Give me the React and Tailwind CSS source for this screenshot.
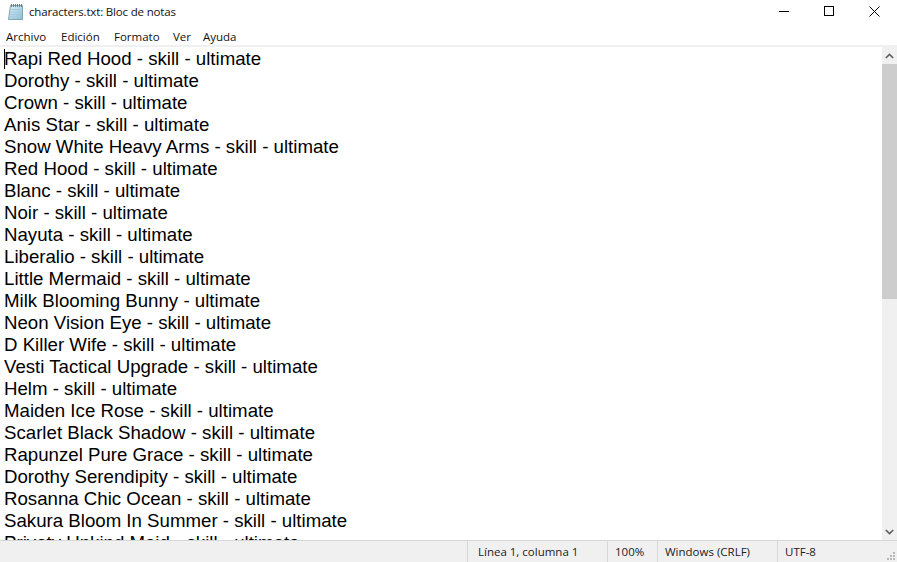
import React from "react";

const lines = [
  "Rapi Red Hood - skill - ultimate",
  "Dorothy - skill - ultimate",
  "Crown - skill - ultimate",
  "Anis Star - skill - ultimate",
  "Snow White Heavy Arms - skill - ultimate",
  "Red Hood - skill - ultimate",
  "Blanc - skill - ultimate",
  "Noir - skill - ultimate",
  "Nayuta - skill - ultimate",
  "Liberalio - skill - ultimate",
  "Little Mermaid - skill - ultimate",
  "Milk Blooming Bunny - ultimate",
  "Neon Vision Eye - skill - ultimate",
  "D Killer Wife - skill - ultimate",
  "Vesti Tactical Upgrade - skill - ultimate",
  "Helm - skill - ultimate",
  "Maiden Ice Rose - skill - ultimate",
  "Scarlet Black Shadow - skill - ultimate",
  "Rapunzel Pure Grace - skill - ultimate",
  "Dorothy Serendipity - skill - ultimate",
  "Rosanna Chic Ocean - skill - ultimate",
  "Sakura Bloom In Summer - skill - ultimate",
  "Privaty Unkind Maid - skill - ultimate",
];

const menus = [
  { label: "Archivo", w: "w-[55px]" },
  { label: "Edición", w: "w-[53px]" },
  { label: "Formato", w: "w-[59px]" },
  { label: "Ver", w: "w-[30px]" },
  { label: "Ayuda", w: "w-[50px]" },
];

function NotepadIcon() {
  return (
    <svg width="16" height="17" viewBox="0 0 16 17" className="shrink-0">
      <defs>
        <linearGradient id="pad" x1="0" y1="0" x2="1" y2="1">
          <stop offset="0" stopColor="#dff2f8" />
          <stop offset="1" stopColor="#86bdd6" />
        </linearGradient>
      </defs>
      <path d="M3.5 2.5H15.5V16.5H1.5Z" fill="url(#pad)" stroke="#86a3b2" />
      <path d="M4 6.5h10M3.5 9h10.5M3 11.5h11M2.5 14h11.5" stroke="#a6cadb" />
      <path d="M4.5 1v3M6.5 1v3M8.5 1v3M10.5 1v3M12.5 1v3M14.5 1v3" stroke="#6d7f88" />
    </svg>
  );
}

function ScrollChevron({ down }) {
  return (
    <svg width="9" height="6" viewBox="0 0 9 6" className={down ? "rotate-180" : ""}>
      <path d="M0.8 5L4.5 1.4L8.2 5" fill="none" stroke="#606060" strokeWidth="1.7" />
    </svg>
  );
}

export default function App() {
  return (
    <div className="flex flex-col w-[897px] h-[562px] overflow-hidden bg-white text-black font-['Open_Sans','Noto_Sans',sans-serif]">
      {/* Title bar */}
      <div className="flex items-center h-[22px] shrink-0 pl-[7px]">
        <NotepadIcon />
        <span className="ml-[6px] pt-[2px] text-[11.5px] tracking-[-0.17px] text-[#111]">characters.txt: Bloc de notas</span>
        <div className="ml-auto flex items-center">
          <button className="w-[45px] h-[22px] flex items-center justify-center">
            <span className="block w-[10px] h-px bg-black" />
          </button>
          <button className="w-[46px] h-[22px] flex items-center justify-center">
            <span className="block w-[10px] h-[10px] border border-black" />
          </button>
          <button className="w-[45px] h-[22px] flex items-center justify-center">
            <svg width="11" height="11" viewBox="0 0 11 11">
              <path d="M0.5 0.5L10.5 10.5M10.5 0.5L0.5 10.5" stroke="#000" strokeWidth="1" />
            </svg>
          </button>
        </div>
      </div>

      {/* Menu bar */}
      <div className="flex items-center h-[23px] pt-[6px] shrink-0 text-[11.5px] text-[#111]">
        {menus.map((m) => (
          <span key={m.label} className={`${m.w} pl-[6px]`}>{m.label}</span>
        ))}
      </div>
      <div className="h-[2px] shrink-0 bg-[#f0f0f0]" />

      {/* Editor */}
      <div className="flex flex-1 min-h-0">
        <div className="relative flex-1 min-w-0 overflow-hidden pl-[4px] pt-[1px] font-['Liberation_Sans',Arial,sans-serif] text-[18.67px] leading-[22px]">
          <span className="absolute left-[4px] top-[2px] w-px h-[20px] bg-black" />
          {lines.map((l) => (
            <div key={l} className="whitespace-pre">{l}</div>
          ))}
        </div>
        <div className="flex flex-col w-[15px] shrink-0 bg-[#f0f0f0]">
          <div className="h-[17px] flex items-center justify-center"><ScrollChevron /></div>
          <div className="h-[235px] bg-[#cdcdcd]" />
          <div className="flex-1" />
          <div className="h-[17px] flex items-center justify-center"><ScrollChevron down /></div>
        </div>
      </div>

      {/* Status bar */}
      <div className="relative flex h-[22px] shrink-0 bg-[#f0f0f0] border-t border-[#d7d7d7] text-[11.5px] text-[#222] items-center">
        <div className="w-[467px]" />
        <div className="w-[140px] h-full flex items-center border-l border-[#d7d7d7] pl-[10px] pt-[1px]">Línea 1, columna 1</div>
        <div className="w-[50px] h-full flex items-center border-l border-[#d7d7d7] pl-[7px] pt-[1px]">100%</div>
        <div className="w-[120px] h-full flex items-center border-l border-[#d7d7d7] pl-[7px] pt-[1px]">Windows (CRLF)</div>
        <div className="flex-1 h-full flex items-center border-l border-[#d7d7d7] pl-[7px] pt-[1px]">UTF-8</div>
        <svg width="10" height="10" viewBox="0 0 10 10" className="absolute right-[1px] bottom-[1px]">
          <path d="M7 1h2v2H7zM4 4h2v2H4zM7 4h2v2H7zM1 7h2v2H1zM4 7h2v2H4zM7 7h2v2H7z" fill="#b8b8b8" />
        </svg>
      </div>
    </div>
  );
}
